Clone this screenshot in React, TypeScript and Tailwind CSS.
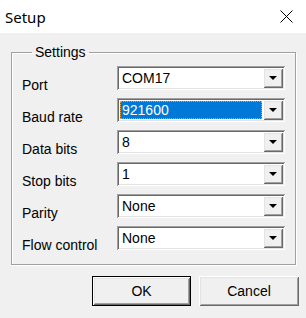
import React from 'react';

const rows = [
  { label: 'Port', value: 'COM17' },
  { label: 'Baud rate', value: '921600', focused: true },
  { label: 'Data bits', value: '8' },
  { label: 'Stop bits', value: '1' },
  { label: 'Parity', value: 'None' },
  { label: 'Flow control', value: 'None' },
];

const raised =
  'shadow-[inset_1px_1px_0_#ffffff,inset_-1px_-1px_0_#696969,inset_2px_2px_0_#e3e3e3,inset_-2px_-2px_0_#a0a0a0]';

function Combo({ value, focused }: { value: string; focused?: boolean }) {
  return (
    <div className="flex h-[24px] w-[168px] bg-white p-[2px] shadow-[inset_1px_1px_0_#a0a0a0,inset_-1px_-1px_0_#ffffff,inset_2px_2px_0_#696969,inset_-2px_-2px_0_#e3e3e3]">
      <div className="flex flex-1 items-center p-[1px]">
        {focused ? (
          <div className="flex h-full w-full items-center border border-dotted border-[#e8a040] bg-[#0078d7] pl-[1px] text-white">
            {value}
          </div>
        ) : (
          <div className="pl-[2px]">{value}</div>
        )}
      </div>
      <div className={`flex w-[20px] items-center justify-center bg-[#f0f0f0] ${raised}`}>
        <svg width="8" height="4" viewBox="0 0 8 4">
          <polygon points="0,0 8,0 4,4" fill="#000" />
        </svg>
      </div>
    </div>
  );
}

export default function App() {
  return (
    <div className="flex h-[318px] w-[306px] flex-col bg-[#f0f0f0] text-[14px] leading-[16px] text-black" style={{ fontFamily: '"Liberation Sans", Arial, sans-serif' }}>
      {/* title bar */}
      <div className="flex h-[33px] items-center justify-between bg-white pl-[5px] pr-[13px]">
        <span className="text-[15px] text-[#000]" style={{ fontFamily: '"Noto Sans", "Open Sans", sans-serif' }}>
          Setup
        </span>
        <svg width="13" height="13" viewBox="0 0 13 13">
          <path d="M0.5 0.5 L12.5 12.5 M12.5 0.5 L0.5 12.5" stroke="#000" strokeWidth="1" />
        </svg>
      </div>

      <fieldset className="ml-[11px] mt-[11px] w-[285px] border border-[#a0a0a0] pb-[14px] pl-[10px] pt-[6px] shadow-[1px_1px_0_#ffffff,inset_1px_1px_0_#ffffff]">
        <legend className="ml-[10px] px-[3px]">Settings</legend>
        <div className="grid grid-cols-[95px_168px] gap-y-[8px]">
          {rows.map((r) => (
            <React.Fragment key={r.label}>
              <div className="h-[24px] whitespace-nowrap pt-[11px]">{r.label}</div>
              <Combo value={r.value} focused={r.focused} />
            </React.Fragment>
          ))}
        </div>
      </fieldset>

      <div className="mt-[11px] flex justify-end gap-[8px] pr-[7px]">
        <button className="h-[30px] w-[99px] border border-black bg-[#f0f0f0]">
          <div className={`flex h-full w-full items-center justify-center ${raised}`}>OK</div>
        </button>
        <button className={`flex h-[30px] w-[100px] items-center justify-center bg-[#f0f0f0] ${raised}`}>
          Cancel
        </button>
      </div>
    </div>
  );
}
